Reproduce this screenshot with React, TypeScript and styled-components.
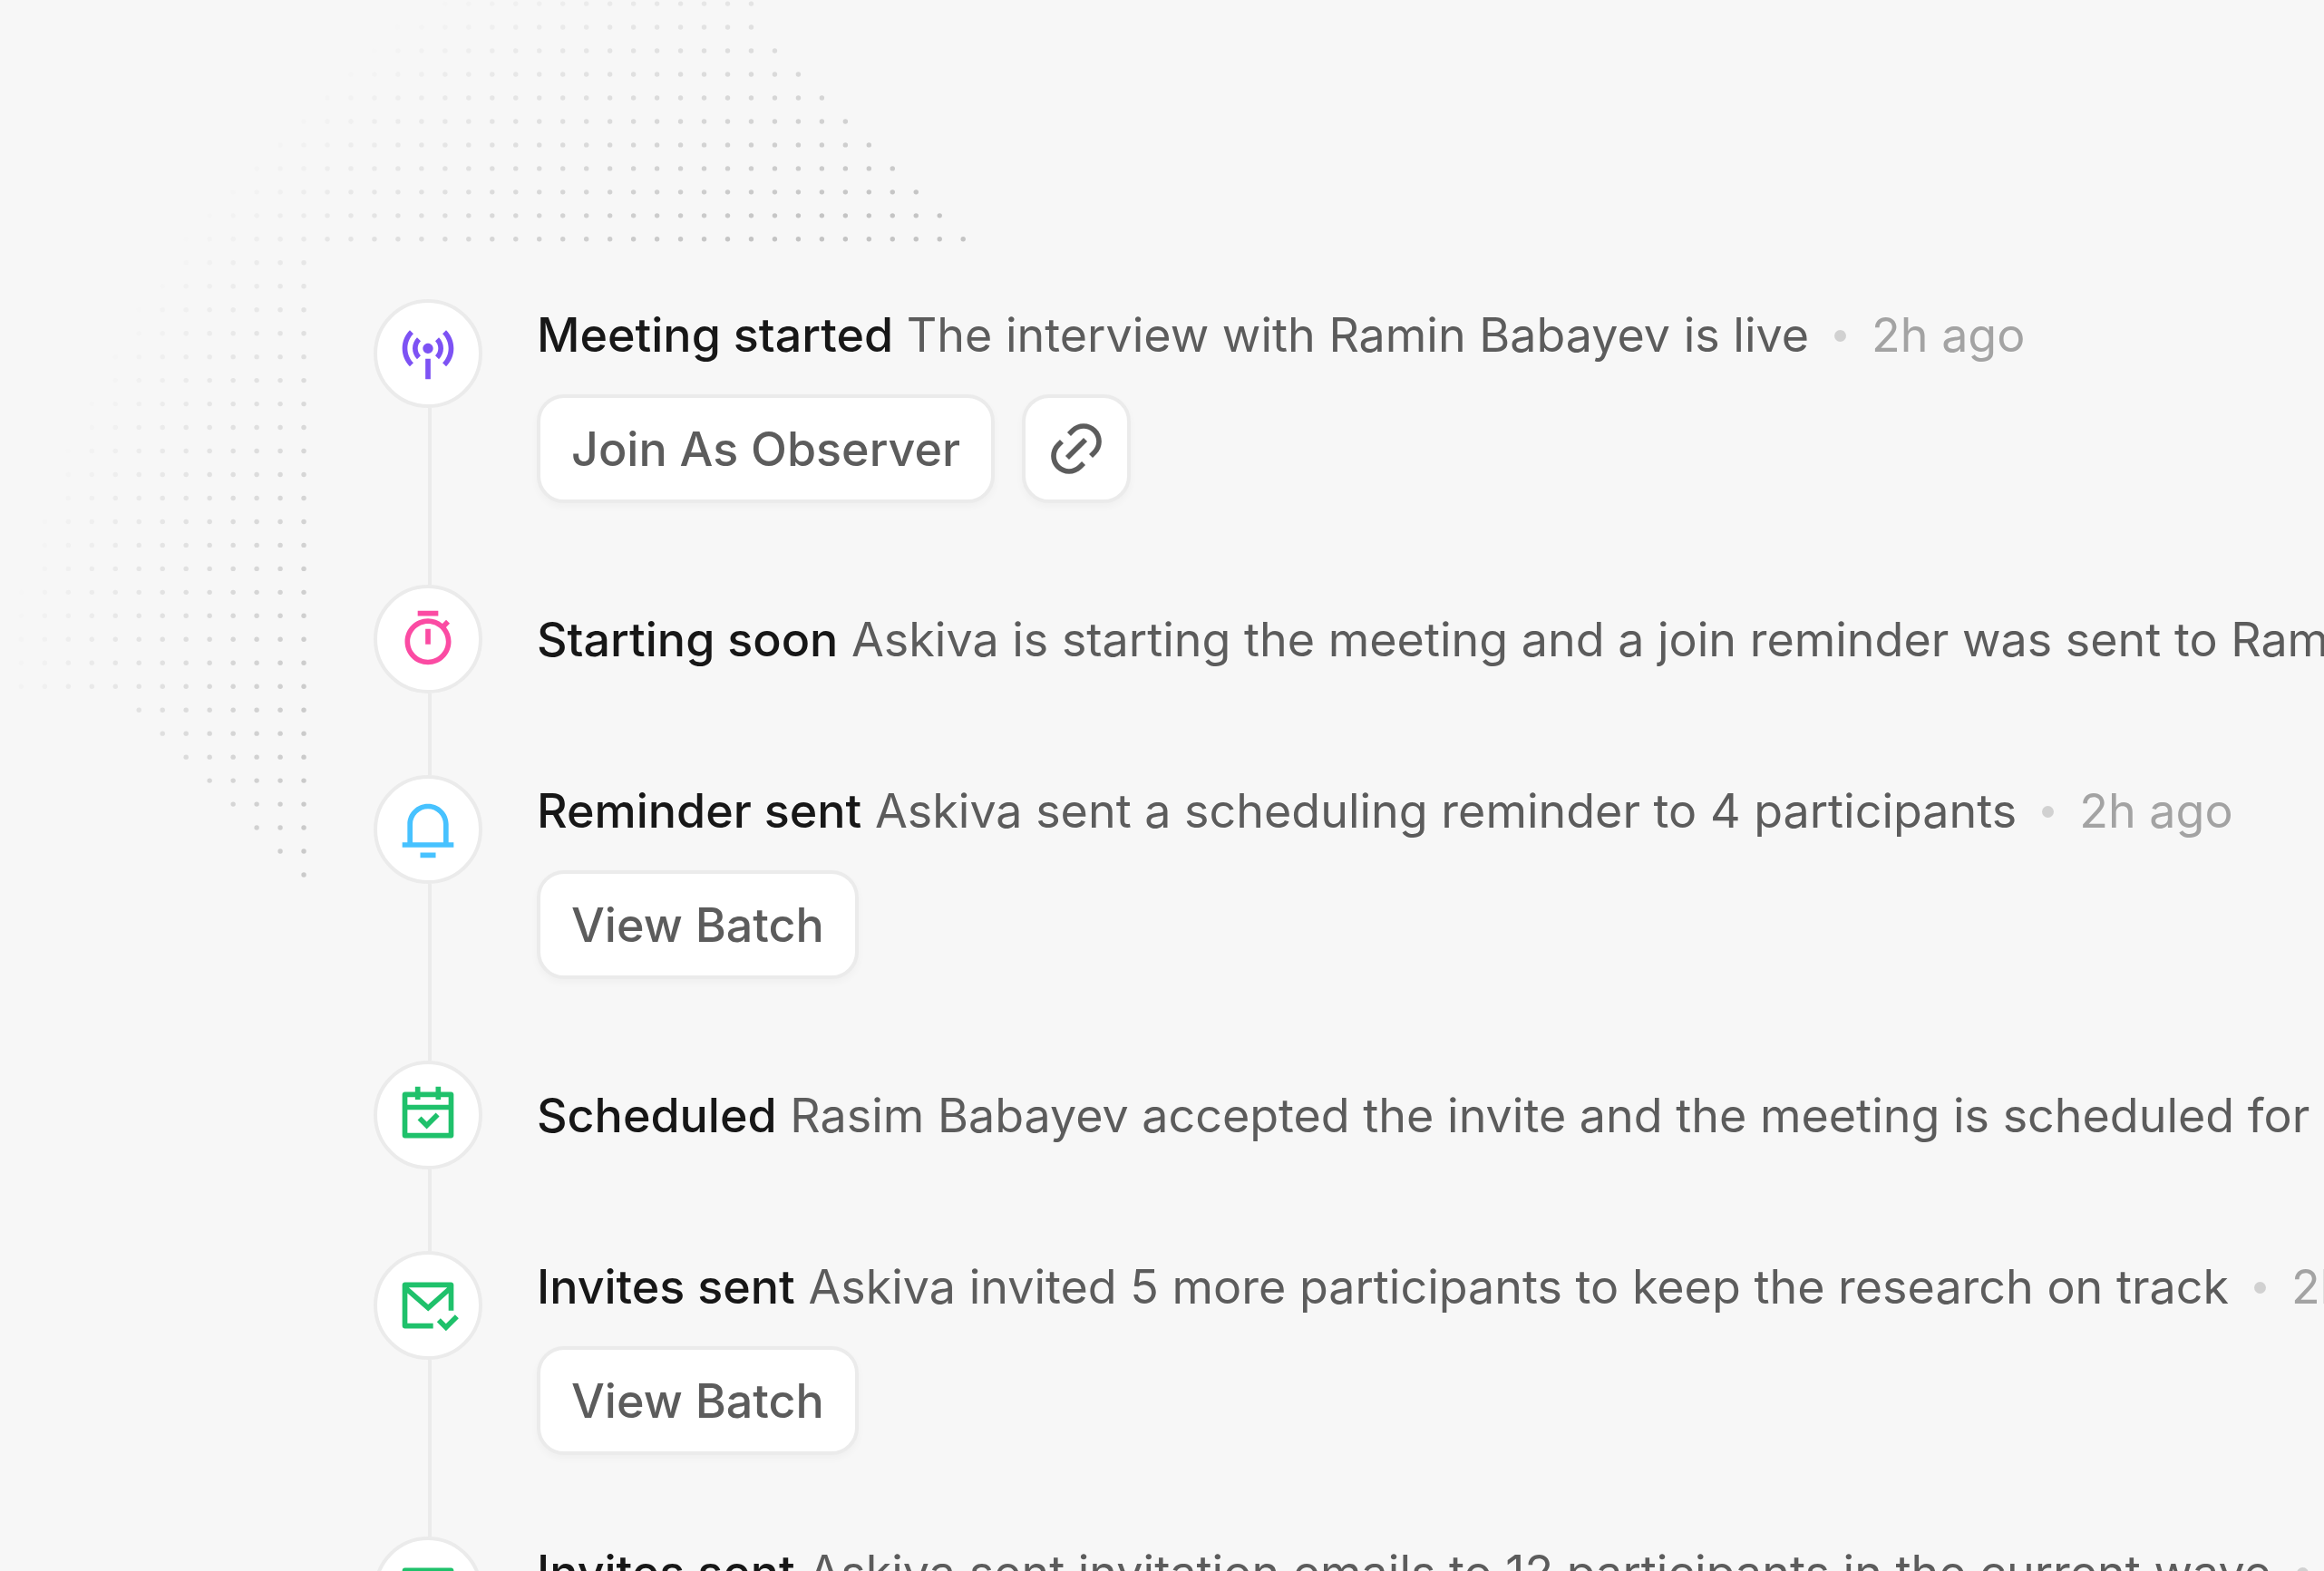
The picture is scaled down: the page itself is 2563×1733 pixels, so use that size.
import React from 'react';
import styled, { createGlobalStyle } from 'styled-components';
import type { IconType } from 'react-icons';
import {
  RiBroadcastLine,
  RiCalendarCheckLine,
  RiLink,
  RiMailCheckLine,
  RiNotification3Line,
  RiTimerLine,
} from 'react-icons/ri';

const GlobalStyle = createGlobalStyle`
  *, *::before, *::after { box-sizing: border-box; }
  body {
    margin: 0;
    background: #f7f7f7;
    font-family: Inter, "Liberation Sans", sans-serif;
  }
`;

const Page = styled.main`
  position: relative;
  height: 100vh;
  overflow: hidden;
  padding: 330px 0 0 412px;
`;

const Pattern = styled.svg`
  position: absolute;
  top: 0;
  left: 0;
  pointer-events: none;
`;

const Timeline = styled.ol`
  position: relative;
  display: flex;
  flex-direction: column;
  margin: 0;
  padding: 0;
  list-style: none;
`;

const Item = styled.li`
  display: flex;
  gap: 60px;
`;

const Rail = styled.div`
  display: flex;
  flex: none;
  flex-direction: column;
  width: 120px;
`;

const Marker = styled.div<{ $color: string }>`
  display: flex;
  align-items: center;
  justify-content: center;
  height: 120px;
  border: 4px solid #ebebeb;
  border-radius: 50%;
  background: #fff;
  color: ${(p) => p.$color};
`;

const Connector = styled.div`
  flex: 1;
  min-height: 90px;
  width: 4px;
  margin-left: 60px;
  background: #ebebeb;
`;

const Content = styled.div`
  display: flex;
  flex: 1;
  flex-direction: column;
  justify-content: center;
  gap: 27px;
  min-width: 0;
  min-height: 120px;
  margin-bottom: 90px;
`;

const Summary = styled.div`
  display: flex;
  align-items: center;
  gap: 28px;
  padding-top: 2px;
  font-size: 52px;
  line-height: 76px;
  white-space: nowrap;
`;

const Message = styled.p`
  margin: 0;
  color: #5c5c5c;
`;

const Title = styled.strong`
  font-weight: 500;
  color: #171717;
`;

const Separator = styled.span`
  flex: none;
  width: 13px;
  height: 13px;
  border-radius: 50%;
  background: #d1d1d1;
`;

const Time = styled.time`
  color: #a3a3a3;
`;

const Actions = styled.div`
  display: flex;
  gap: 30px;
`;

const Button = styled.button<{ $square?: boolean }>`
  display: flex;
  align-items: center;
  justify-content: center;
  width: ${(p) => (p.$square ? '120px' : 'auto')};
  height: 120px;
  padding: ${(p) => (p.$square ? '0' : '2px 34px 0')};
  border: 4px solid #ebebeb;
  border-radius: 30px;
  background: #fff;
  box-shadow: 0 4px 8px rgba(10, 13, 20, 0.03);
  color: #5c5c5c;
  font: 500 52px/76px Inter, "Liberation Sans", sans-serif;
  white-space: nowrap;
`;

const PITCH = 25.97;
const FADE = { x: 1060, y: 900, outer: 1073, inner: 680 };

const firstColumn = (row: number) => (row < 30 ? 0 : row - 25);
const lastColumn = (row: number) => (row > 10 ? 12 : Math.max(31, row + 30));

function DotPattern() {
  const dots: React.ReactNode[] = [];
  for (let row = 0; row < 38; row += 1) {
    for (let col = firstColumn(row); col <= lastColumn(row); col += 1) {
      const x = 23.4 + col * PITCH;
      const y = 4.1 + row * PITCH;
      const distance = Math.hypot(x - FADE.x, y - FADE.y);
      const strength = Math.min(1, (FADE.outer - distance) / (FADE.outer - FADE.inner));
      if (strength > 0) {
        dots.push(<circle key={`${row}-${col}`} cx={x} cy={y} r={2.7} opacity={strength} />);
      }
    }
  }
  return (
    <Pattern width="1100" height="1000" fill="#c4c4c4" aria-hidden="true">
      {dots}
    </Pattern>
  );
}

interface TimelineEvent {
  icon: IconType;
  color: string;
  title: string;
  text: string;
  action?: string;
  copyLink?: boolean;
}

const events: TimelineEvent[] = [
  {
    icon: RiBroadcastLine,
    color: '#7d52f4',
    title: 'Meeting started',
    text: 'The interview with Ramin Babayev is live',
    action: 'Join As Observer',
    copyLink: true,
  },
  {
    icon: RiTimerLine,
    color: '#fb4ba3',
    title: 'Starting soon',
    text: 'Askiva is starting the meeting and a join reminder was sent to Ramin',
  },
  {
    icon: RiNotification3Line,
    color: '#47c2ff',
    title: 'Reminder sent',
    text: 'Askiva sent a scheduling reminder to 4 participants',
    action: 'View Batch',
  },
  {
    icon: RiCalendarCheckLine,
    color: '#1fc16b',
    title: 'Scheduled',
    text: 'Rasim Babayev accepted the invite and the meeting is scheduled for Oct',
  },
  {
    icon: RiMailCheckLine,
    color: '#1fc16b',
    title: 'Invites sent',
    text: 'Askiva invited 5 more participants to keep the research on track',
    action: 'View Batch',
  },
  {
    icon: RiMailCheckLine,
    color: '#1fc16b',
    title: 'Invites sent',
    text: 'Askiva sent invitation emails to 12 participants in the current wave',
    action: 'View Batch',
  },
];

export default function App() {
  return (
    <>
      <GlobalStyle />
      <Page>
        <DotPattern />
        <Timeline>
          {events.map(({ icon: Icon, color, title, text, action, copyLink }) => (
            <Item key={text}>
              <Rail>
                <Marker $color={color}>
                  <Icon size={68} aria-hidden="true" />
                </Marker>
                <Connector />
              </Rail>
              <Content>
                <Summary>
                  <Message>
                    <Title>{title}</Title> {text}
                  </Message>
                  <Separator />
                  <Time>2h ago</Time>
                </Summary>
                {action && (
                  <Actions>
                    <Button type="button">{action}</Button>
                    {copyLink && (
                      <Button type="button" $square aria-label="Copy link">
                        <RiLink size={68} aria-hidden="true" />
                      </Button>
                    )}
                  </Actions>
                )}
              </Content>
            </Item>
          ))}
        </Timeline>
      </Page>
    </>
  );
}
